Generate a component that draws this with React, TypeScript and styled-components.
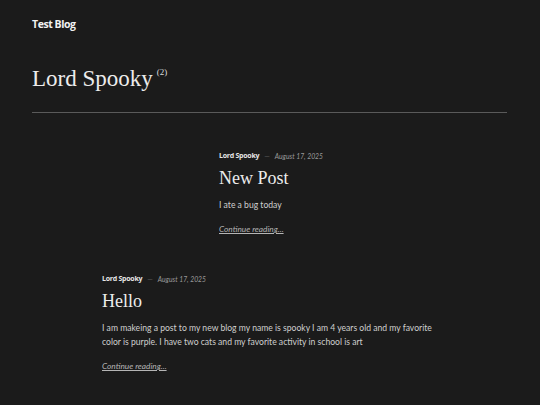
import React from "react";
import styled, { createGlobalStyle } from "styled-components";

const Global = createGlobalStyle`
  html, body { margin: 0; padding: 0; background: #1b1b1b; }
  body { font-family: "Lato", "Noto Sans", sans-serif; color: #d8d8d8; }
  * { box-sizing: border-box; }
`;

const Page = styled.div`
  width: 540px;
  min-height: 405px;
  background: #1b1b1b;
  padding: 0 33px 0 32px;
  display: flex;
  flex-direction: column;
`;

const SiteHeader = styled.header`
  height: 47px;
  display: flex;
  align-items: center;
`;

const SiteTitle = styled.div`
  font-family: "Open Sans", sans-serif;
  font-weight: 700;
  font-size: 10.5px;
  color: #f2f2f2;
  letter-spacing: -0.45px;
`;

const ArchiveTitle = styled.h1`
  margin: 19px 0 0;
  font-family: "Liberation Serif", serif;
  font-weight: 400;
  font-size: 23px;
  line-height: 26px;
  color: #ececec;
  display: flex;
  align-items: flex-start;
  gap: 4px;
`;

const Count = styled.sup`
  font-family: "Liberation Serif", serif;
  font-size: 9px;
  line-height: 9px;
  color: #dcdcdc;
  margin-top: 2px;
`;

const Divider = styled.hr`
  margin: 20px 0 0;
  border: 0;
  height: 1px;
  background: #5a5a5a;
`;

const PostList = styled.div`
  display: flex;
  flex-direction: column;
  gap: 40px;
  padding-top: 38px;
`;

const Post = styled.article<{ $indent: number }>`
  margin-left: ${(p) => p.$indent}px;
  max-width: 340px;
  display: flex;
  flex-direction: column;
`;

const Meta = styled.div`
  display: flex;
  align-items: center;
  gap: 5px;
  font-size: 7px;
  line-height: 10px;
`;

const Author = styled.span`
  font-family: "Open Sans", sans-serif;
  font-weight: 700;
  color: #e6e6e6;
  letter-spacing: -0.25px;
`;

const Dash = styled.span`
  color: #5c5c5c;
`;

const PostDate = styled.span`
  font-family: "Lato", sans-serif;
  font-style: italic;
  font-size: 6.8px;
  color: #9a9a9a;
`;

const PostTitle = styled.h2`
  margin: 5px 0 0;
  font-family: "Liberation Serif", serif;
  font-weight: 400;
  font-size: 18px;
  line-height: 24px;
  color: #ececec;
`;

const Excerpt = styled.p`
  margin: 8px 0 0;
  font-family: "Lato", sans-serif;
  font-size: 8.6px;
  line-height: 14px;
  color: #cfcfcf;
`;

const More = styled.a`
  margin-top: 12px;
  font-family: "Lato", sans-serif;
  font-style: italic;
  font-size: 8.3px;
  line-height: 10px;
  color: #b5b5b5;
  text-decoration: underline;
  align-self: flex-start;
`;

const posts = [
  {
    indent: 187,
    title: "New Post",
    body: "I ate a bug today",
  },
  {
    indent: 70,
    title: "Hello",
    body:
      "I am makeing a post to my new blog my name is spooky I am 4 years old and my favorite color is purple. I have two cats and my favorite activity in school is art",
  },
];

export default function App() {
  return (
    <>
      <Global />
      <Page>
        <SiteHeader>
          <SiteTitle>Test Blog</SiteTitle>
        </SiteHeader>
        <ArchiveTitle>
          Lord Spooky <Count>(2)</Count>
        </ArchiveTitle>
        <Divider />
        <PostList>
          {posts.map((p) => (
            <Post key={p.title} $indent={p.indent}>
              <Meta>
                <Author>Lord Spooky</Author>
                <Dash>—</Dash>
                <PostDate>August 17, 2025</PostDate>
              </Meta>
              <PostTitle>{p.title}</PostTitle>
              <Excerpt>{p.body}</Excerpt>
              <More href="#">Continue reading...</More>
            </Post>
          ))}
        </PostList>
      </Page>
    </>
  );
}
